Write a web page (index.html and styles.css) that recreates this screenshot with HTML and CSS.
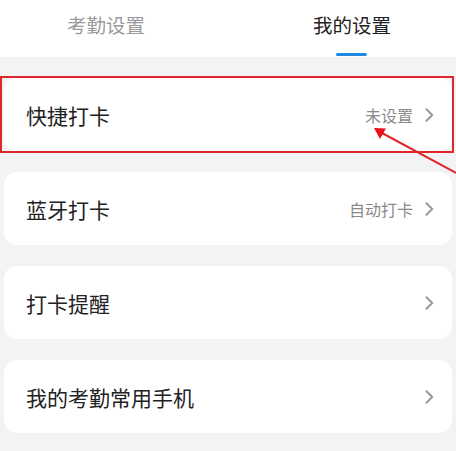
FILE: index.html
```html
<!DOCTYPE html>
<html lang="zh-CN">
<head>
<meta charset="utf-8">
<link rel="stylesheet" href="styles.css">
</head>
<body>
<div class="page">
  <header class="tabs">
    <div class="tab">考勤设置</div>
    <div class="tab active">我的设置</div>
  </header>
  <main class="list">
    <div class="card">
      <span class="title">快捷打卡</span>
      <span class="extra">未设置<svg class="chev" viewBox="0 0 9 14"><path d="M1.5 1.2 L7.2 7 L1.5 12.8"/></svg></span>
    </div>
    <div class="card">
      <span class="title">蓝牙打卡</span>
      <span class="extra">自动打卡<svg class="chev" viewBox="0 0 9 14"><path d="M1.5 1.2 L7.2 7 L1.5 12.8"/></svg></span>
    </div>
    <div class="card">
      <span class="title">打卡提醒</span>
      <span class="extra"><svg class="chev" viewBox="0 0 9 14"><path d="M1.5 1.2 L7.2 7 L1.5 12.8"/></svg></span>
    </div>
    <div class="card">
      <span class="title">我的考勤常用手机</span>
      <span class="extra"><svg class="chev" viewBox="0 0 9 14"><path d="M1.5 1.2 L7.2 7 L1.5 12.8"/></svg></span>
    </div>
  </main>
  <div class="highlight"></div>
  <svg class="arrow" viewBox="0 0 456 451" width="456" height="451">
    <line x1="460" y1="175" x2="382" y2="133" />
    <polygon points="374,128 386,128.5 380,139" />
  </svg>
</div>
</body>
</html>
```
FILE: styles.css
```css
html, body {
  margin: 0;
  padding: 0;
}
body {
  background: #f2f3f5;
  font-family: "Noto Sans CJK SC", "Noto Sans", sans-serif;
  width: 456px;
  height: 451px;
  overflow: hidden;
}
.page {
  position: relative;
  width: 456px;
  height: 451px;
}
.tabs {
  height: 57px;
  background: #ffffff;
  display: flex;
  justify-content: space-between;
  padding: 0 65px 0 67px;
  box-sizing: border-box;
}
.tab {
  position: relative;
  font-size: 19.5px;
  line-height: 20px;
  padding-top: 15px;
  color: #9a9a9c;
}
.tab.active {
  color: #222222;
}
.tab.active::after {
  content: "";
  position: absolute;
  left: 23px;
  top: 53px;
  width: 31px;
  height: 3px;
  border-radius: 2px;
  background: #1e88e5;
}
.list {
  display: flex;
  flex-direction: column;
  gap: 21px;
  padding: 21px 4px 0 4px;
}
.card {
  height: 73px;
  background: #ffffff;
  border-radius: 13px;
  display: flex;
  align-items: center;
  justify-content: space-between;
  padding: 0 18px 0 22px;
}
.title {
  font-size: 21px;
  color: #222222;
}
.extra {
  display: flex;
  align-items: center;
  font-size: 16px;
  color: #8a8a8c;
}
.chev {
  width: 9px;
  height: 14px;
  margin-left: 12px;
  fill: none;
  stroke: #9a9a9c;
  stroke-width: 2;
  stroke-linecap: round;
  stroke-linejoin: round;
}
.highlight {
  position: absolute;
  left: 0;
  top: 76px;
  width: 454px;
  height: 77px;
  border: 2px solid #e0262b;
  box-sizing: border-box;
}
.arrow {
  position: absolute;
  left: 0;
  top: 0;
  pointer-events: none;
}
.arrow line {
  stroke: #e0262b;
  stroke-width: 2;
}
.arrow polygon {
  fill: #e8101a;
}
```
